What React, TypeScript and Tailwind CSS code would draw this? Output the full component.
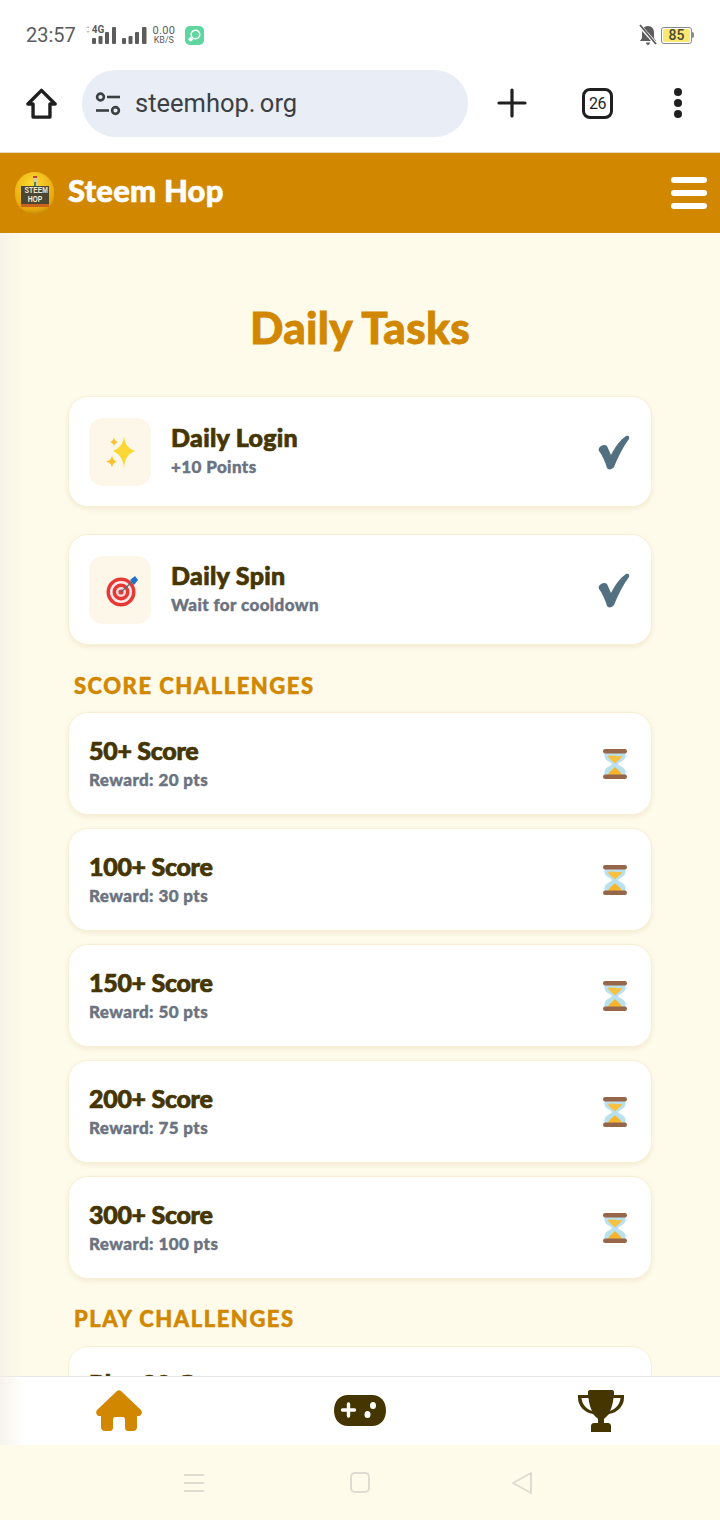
const HEADING = "font-['Lato',sans-serif] font-black";
const CARD_TITLE = `${HEADING} h-[32px] text-[25px] text-[#453500] [-webkit-text-stroke:0.7px_#453500]`;
const CARD_SUB = `${HEADING} h-[24px] text-[17px] text-[#6b7280] [-webkit-text-stroke:0.4px_#6b7280]`;
const SECTION = `${HEADING} h-[24px] leading-[26px] pl-[6px] text-[22px] tracking-[1.5px] text-[#d18800] [-webkit-text-stroke:0.5px_#d18800]`;

const scoreTasks = [
  { title: "50+ Score", reward: "Reward: 20 pts" },
  { title: "100+ Score", reward: "Reward: 30 pts" },
  { title: "150+ Score", reward: "Reward: 50 pts" },
  { title: "200+ Score", reward: "Reward: 75 pts" },
  { title: "300+ Score", reward: "Reward: 100 pts" },
];

function Sparkles() {
  return (
    <svg width="32" height="34" viewBox="0 0 32 34">
      <path d="M20 1 C21 10 24 13 31 16 C24 19 21 23 20 33 C19 23 15 19 9 16 C15 13 19 10 20 1Z" fill="#fdd835" />
      <path d="M8 20 C8.6 24 10 25.5 13 26.5 C10 27.5 8.6 29 8 33 C7.4 29 6 27.5 2 26.5 C6 25.5 7.4 24 8 20Z" fill="#fbc02d" />
      <path d="M10 2 C10.4 5 11.5 6.2 14 7 C11.5 7.8 10.4 9 10 12 C9.6 9 8.5 7.8 6 7 C8.5 6.2 9.6 5 10 2Z" fill="#f9c22e" />
    </svg>
  );
}

function Target() {
  return (
    <svg className="ml-[3px]" width="32" height="34" viewBox="0 0 32 34">
      <circle cx="15" cy="19" r="14.5" fill="#e53935" />
      <circle cx="15" cy="19" r="11" fill="#fbeaea" />
      <circle cx="15" cy="19" r="8.5" fill="#e53935" />
      <circle cx="15" cy="19" r="5" fill="#f8dcdc" />
      <circle cx="15" cy="19" r="2.6" fill="#d84343" />
      <path d="M15 19 L26 9" stroke="#5a6b78" strokeWidth="1.4" />
      <path d="M24 7 L29 3 L32 7 L28 12 Z" fill="#1e73c8" />
    </svg>
  );
}

function Check() {
  return (
    <svg width="32" height="36" viewBox="0 0 32 36">
      <path
        d="M1 14 C3 11 7 10 9 12 L13 21 C17 13 22 6 28 2 C30 1 32 2 31 5 C25 13 20 23 16 33 C14 36 10 36 9 34 C7 27 4 21 1 17 C0.5 16 0.5 15 1 14Z"
        fill="#527080"
      />
    </svg>
  );
}

function Hourglass() {
  return (
    <svg width="26" height="32" viewBox="0 0 26 32">
      <path d="M2.5 3 H23.5 V8 C23.5 13 17 13.5 16 16 C17 18.5 23.5 19 23.5 24 V29 H2.5 V24 C2.5 19 9 18.5 10 16 C9 13.5 2.5 13 2.5 8Z" fill="#b9e0ee" />
      <path d="M6 8 C11 6.5 15 9.5 20 7.5 C19.5 11 15 13 13 15.5 C11 13 6.5 11 6 8Z" fill="#f8c03e" />
      <path d="M6 27 C7 23.5 11 21.5 13 19 C15 21.5 19 23.5 20 27Z" fill="#f8b62e" />
      <rect x="1" y="1" width="24" height="4.5" rx="2.2" fill="#96664a" />
      <rect x="1" y="26.5" width="24" height="4.5" rx="2.2" fill="#96664a" />
    </svg>
  );
}

function DailyCard({ icon, title, sub }: { icon: React.ReactNode; title: string; sub: string }) {
  return (
    <div className="h-[111px] flex items-center pl-[20px] pr-[21px] bg-white border border-[#f9f0d4] rounded-[20px] shadow-[0_2px_5px_rgba(120,90,0,0.1)]">
      <div className="w-[62px] h-[68px] flex items-center justify-center rounded-[14px] bg-[#fcf7e9]">{icon}</div>
      <div className="ml-[20px] flex-1">
        <div className={`${CARD_TITLE} leading-[26px] tracking-[0.3px]`}>{title}</div>
        <div className={`${CARD_SUB} leading-[22px] tracking-[0.4px]`}>{sub}</div>
      </div>
      <Check />
    </div>
  );
}

function ScoreCard({ title, reward }: { title: string; reward: string }) {
  return (
    <div className="h-[103px] mb-[13px] flex items-center pl-[20px] pr-[23px] bg-white border border-[#f9f0d4] rounded-[20px] shadow-[0_2px_5px_rgba(120,90,0,0.1)]">
      <div className="flex-1">
        <div className={`${CARD_TITLE} leading-[28px] tracking-[-0.3px]`}>{title}</div>
        <div className={`${CARD_SUB} leading-[24px] tracking-[0.4px]`}>{reward}</div>
      </div>
      <Hourglass />
    </div>
  );
}

function StatusBar() {
  return (
    <div className="h-[68px] flex items-center justify-between pl-[26px] pr-[26px] pt-[2px] font-['Roboto',sans-serif] text-[#5c5c5c]">
      <div className="flex items-center">
        <span className="text-[20px] leading-none">23:57</span>
        <div className="relative ml-[8px] w-[68px] h-[20px]">
          <svg width="68" height="20" viewBox="0 0 68 20" fill="#5c5c5c">
            <path d="M2 3 L4 1 L6 3Z M2 6 L4 8 L6 6Z" fill="#c4c4c4" />
            <rect x="8" y="13" width="4" height="6" rx="1" />
            <rect x="14.5" y="11" width="4" height="8" rx="1" />
            <rect x="21" y="7" width="4" height="12" rx="1" />
            <rect x="28" y="2" width="4" height="17" rx="1" />
            <rect x="38" y="13" width="4" height="6" rx="1" />
            <rect x="44.5" y="11" width="4" height="8" rx="1" />
            <rect x="51" y="7" width="4" height="12" rx="1" />
            <rect x="58" y="2" width="4.5" height="17" rx="1" />
          </svg>
          <span className="absolute left-[8px] top-[0px] text-[10px] font-bold leading-none">4G</span>
        </div>
        <div className="-ml-[1px] w-[26px] flex flex-col items-center">
          <span className="text-[11px] leading-[10px] tracking-[0.3px]">0.00</span>
          <span className="text-[9px] leading-[9px]">KB/S</span>
        </div>
        <svg className="ml-[8px]" width="19" height="19" viewBox="0 0 20 20">
          <rect width="20" height="20" rx="5" fill="#5fd6a0" />
          <circle cx="11" cy="9" r="4.5" fill="none" stroke="#fff" strokeWidth="1.6" />
          <circle cx="6" cy="14" r="2.2" fill="#fff" />
        </svg>
      </div>
      <div className="flex items-center">
        <svg width="20" height="22" viewBox="0 0 20 22" fill="#5c5c5c">
          <path d="M10 2 C14 2 16 5 16 9 V14 L18 17 H2 L4 14 V9 C4 5 6 2 10 2Z M8 18.5 H12 C12 20 11 21 10 21 C9 21 8 20 8 18.5Z" />
          <path d="M2 2 L18 20" stroke="#fff" strokeWidth="3.4" />
          <path d="M2 1 L18 20" stroke="#5c5c5c" strokeWidth="1.8" />
        </svg>
        <div className="ml-[3px] w-[31px] h-[17px] flex items-center justify-center rounded-[3px] border border-[#8a8a8a]">
          <div className="w-[27px] h-[13px] flex items-center justify-center rounded-[2px] bg-[#fbe871] text-[14px] font-medium leading-none text-[#4a4a3a]">
            85
          </div>
        </div>
        <div className="w-[2px] h-[6px] rounded-r-sm bg-[#8a8a8a]" />
      </div>
    </div>
  );
}

function BrowserBar() {
  return (
    <div className="h-[84px] flex items-start pl-[26px]">
      <svg className="mt-[20px]" width="31" height="31" viewBox="0 0 33 33" fill="none" stroke="#1f1f1f" strokeWidth="3.6" strokeLinejoin="round">
        <path d="M16.5 2.5 L31 17 H25.5 V31 H7.5 V17 H2 Z" />
      </svg>
      <div className="ml-[25px] w-[386px] h-[67px] mt-[2px] flex items-center rounded-full bg-[#e8edf6] pl-[13px]">
        <svg width="26" height="24" viewBox="0 0 26 24" fill="none" stroke="#3c4043" strokeWidth="2.6">
          <circle cx="5.5" cy="5" r="3.4" />
          <path d="M12 5 H25" />
          <path d="M1 18.5 H14" />
          <circle cx="20.5" cy="18.5" r="3.4" />
        </svg>
        <span className="ml-[14px] font-['Roboto',sans-serif] text-[25.5px] leading-none text-[#3c4043] [word-spacing:-2px]">
          steemhop. org
        </span>
      </div>
      <svg className="ml-[29px] mt-[20px]" width="30" height="30" viewBox="0 0 30 30" stroke="#1f1f1f" strokeWidth="3.2" strokeLinecap="round">
        <path d="M15 2 V28 M2 15 H28" />
      </svg>
      <div className="ml-[55px] mt-[20px] w-[31px] h-[31px] flex items-center justify-center rounded-[8px] border-[3px] border-[#1f1f1f] font-['Roboto',sans-serif] text-[16px] leading-none tracking-[-0.5px] text-[#1f1f1f]">
        26
      </div>
      <div className="ml-[61px] mt-[20px] h-[30px] flex flex-col justify-between">
        <div className="w-[8px] h-[8px] rounded-full bg-[#1f1f1f]" />
        <div className="w-[8px] h-[8px] rounded-full bg-[#1f1f1f]" />
        <div className="w-[8px] h-[8px] rounded-full bg-[#1f1f1f]" />
      </div>
    </div>
  );
}

function Logo() {
  return (
    <div className="w-[39px] h-[42px] rounded-full bg-[radial-gradient(circle_at_45%_30%,#ffdc33,#e6a50a_70%,#8a6a10)] flex flex-col items-center justify-center">
      <svg width="10" height="10" viewBox="0 0 10 10" className="-mt-[3px]">
        <rect x="3" y="0" width="4" height="10" fill="#d9c9a0" />
        <rect x="3" y="0" width="4" height="2" fill="#c8402a" />
        <rect x="4" y="6" width="2" height="4" fill="#4f8a3a" />
      </svg>
      <div className="bg-[#4a4632] text-[#f2ead0] font-['Liberation_Sans',sans-serif] font-bold text-[9px] leading-[9px] text-center w-[28px] overflow-hidden">
        <div className="scale-x-[0.75]">STEEM</div>
        <div className="scale-x-[0.75]">HOP</div>
      </div>
      <div className="w-[28px] h-[3px] bg-[#c9621c]" />
    </div>
  );
}

function Header() {
  return (
    <header className="h-[81px] flex items-center justify-between pl-[15px] pr-[13px] border-t border-[#e2dcc4] bg-[#d18800]">
      <div className="flex items-center">
        <Logo />
        <span className="ml-[14px] -mt-[6px] font-['Lato',sans-serif] font-black text-[31px] leading-none tracking-[0.2px] text-white [-webkit-text-stroke:0.6px_#ffffff]">
          Steem Hop
        </span>
      </div>
      <div className="flex flex-col gap-[7px]">
        <div className="w-[36px] h-[6px] rounded-full bg-white" />
        <div className="w-[36px] h-[6px] rounded-full bg-white" />
        <div className="w-[36px] h-[6px] rounded-full bg-white" />
      </div>
    </header>
  );
}

function BottomNav() {
  return (
    <nav className="h-[69px] flex items-start border-t border-[#e5e7eb] bg-white">
      <div className="w-[238px] flex justify-center pt-[13px]">
        <svg width="46" height="41" viewBox="0 0 46 41" fill="#d18800">
          <path d="M21 1 C22 0 24 0 25 1 L45 20 C47 23 45 26 43 26 H41 V37 C41 39.5 39.5 41 37 41 H32 C30 41 29 39.5 29 38 V30 C29 28 28 27 27 27 H19 C18 27 17 28 17 30 V38 C17 39.5 16 41 14 41 H9 C6.5 41 5 39.5 5 37 V26 H3 C1 26 -1 23 1 20 Z" />
        </svg>
      </div>
      <div className="w-[244px] flex justify-center pt-[18px]">
        <svg width="52" height="31" viewBox="0 0 52 31">
          <path d="M14 0 H38 C47 0 52 7 52 15.5 C52 24 47 31 38 31 H14 C5 31 0 24 0 15.5 C0 7 5 0 14 0Z" fill="#453500" />
          <path d="M14.5 9 V21 M8.5 15 H20.5" stroke="#fff" strokeWidth="3.4" strokeLinecap="round" />
          <ellipse cx="39" cy="10.5" rx="3" ry="3.6" fill="#fff" />
          <ellipse cx="33.5" cy="19.5" rx="3" ry="3.6" fill="#fff" />
        </svg>
      </div>
      <div className="flex-1 flex justify-center pt-[13px]">
        <svg className="-ml-[1px]" width="46" height="42" viewBox="0 0 46 42">
          <path d="M12 0 H34 C35.5 0 36 1 36 2 V5 H46 V8 C46 16 39 23 31 24 C29 26 27 28 26 29 V33 H30 C32 33 33 34.5 33 36 V42 H13 V36 C13 34.5 14 33 16 33 H20 V29 C19 28 17 26 15 24 C7 23 0 16 0 8 V5 H10 V2 C10 1 10.5 0 12 0Z" fill="#453500" />
          <path d="M3.5 8 H10.5 C11 13 12.5 18 14 21 C8 19 4 14 3.5 8Z M42.5 8 H35.5 C35 13 33.5 18 32 21 C38 19 42 14 42.5 8Z" fill="#fff" />
        </svg>
      </div>
    </nav>
  );
}

function SystemNav() {
  return (
    <div className="h-[75px] flex items-start bg-[#fffbeb] pt-[27px]">
      <div className="w-[389px] pl-[184px] flex flex-col gap-[6px] pt-[2px]">
        <div className="w-[20px] h-[2px] bg-[#dedbd0]" />
        <div className="w-[20px] h-[2px] bg-[#dedbd0]" />
        <div className="w-[20px] h-[2px] bg-[#dedbd0]" />
      </div>
      <div className="-ml-[39px] w-[20px] h-[21px] rounded-[5px] border-2 border-[#dedbd0]" />
      <svg className="ml-[141px] -mt-[1px]" width="24" height="24" viewBox="0 0 24 24" fill="none" stroke="#dedbd0" strokeWidth="2" strokeLinejoin="round">
        <path d="M20 2 V22 L2 12 Z" />
      </svg>
    </div>
  );
}

export default function App() {
  return (
    <div className="relative w-[720px] h-[1520px] overflow-hidden flex flex-col bg-white">
      <StatusBar />
      <BrowserBar />
      <Header />
      <main className="flex-1 min-h-0 overflow-hidden bg-[#fffbeb] px-[68px] pt-[68px]">
        <h1 className={`${HEADING} h-[54px] leading-[52px] text-center text-[44px] tracking-[0.3px] text-[#d18800] [-webkit-text-stroke:0.8px_#d18800]`}>
          Daily Tasks
        </h1>
        <div className="mt-[41px]">
          <DailyCard icon={<Sparkles />} title="Daily Login" sub="+10 Points" />
        </div>
        <div className="mt-[27px]">
          <DailyCard icon={<Target />} title="Daily Spin" sub="Wait for cooldown" />
        </div>
        <h2 className={`${SECTION} mt-[28px] mb-[15px]`}>SCORE CHALLENGES</h2>
        {scoreTasks.map((task) => (
          <ScoreCard key={task.title} title={task.title} reward={task.reward} />
        ))}
        <h2 className={`${SECTION} mt-[27px] mb-[16px]`}>PLAY CHALLENGES</h2>
        <div className="h-[103px] pl-[20px] pt-[22px] bg-white border border-[#f9f0d4] rounded-[20px]">
          <div className={`${CARD_TITLE} leading-[28px]`}>Play 20 Games</div>
        </div>
      </main>
      <BottomNav />
      <SystemNav />
      <div className="absolute left-0 top-[233px] w-[24px] h-[1212px] bg-gradient-to-r from-[#f3efe4] to-transparent opacity-70" />
    </div>
  );
}
